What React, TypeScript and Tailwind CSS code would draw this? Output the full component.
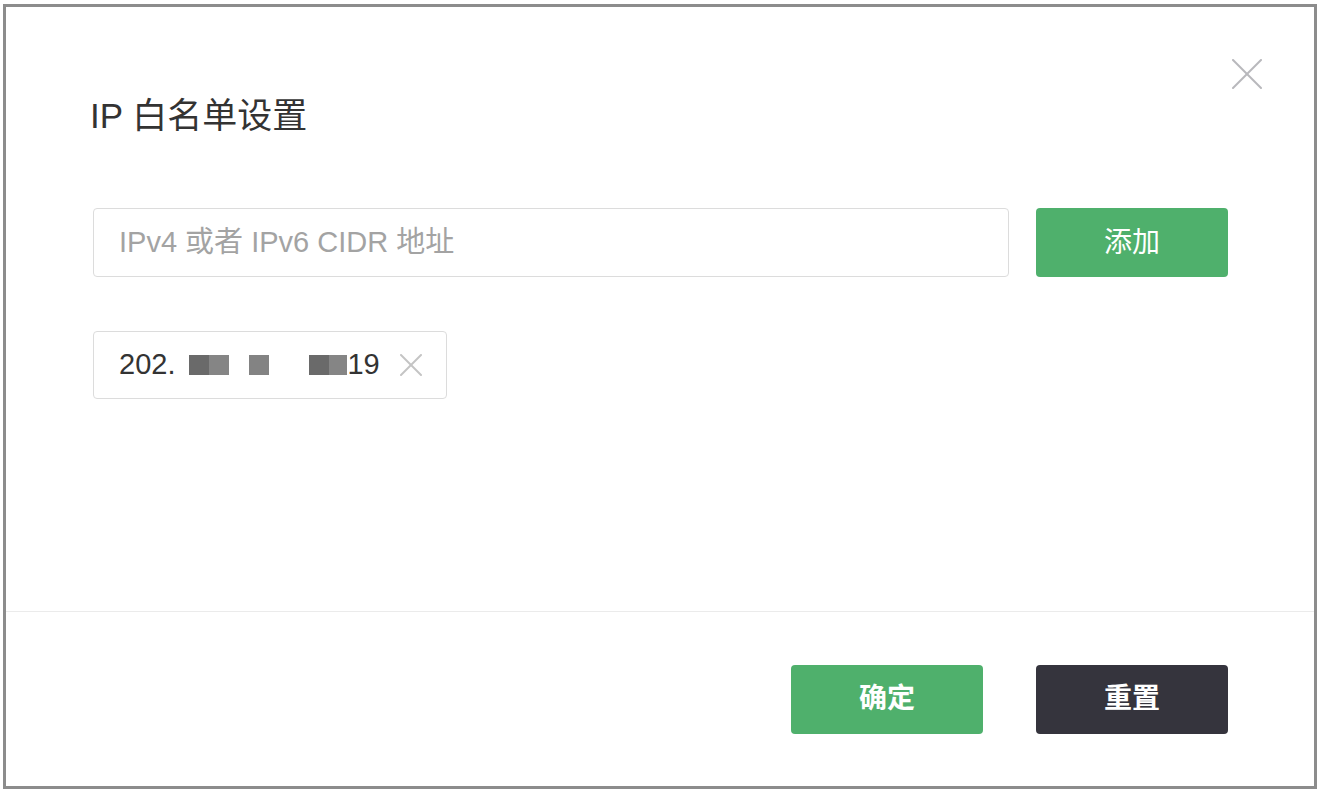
import React from "react";

const font = { fontFamily: '"Liberation Sans", "Noto Sans CJK SC", sans-serif' };

function XIcon({ size, stroke, color }: { size: number; stroke: number; color: string }) {
  return (
    <svg width={size} height={size} viewBox={`0 0 ${size} ${size}`} fill="none">
      <line x1="1" y1="1" x2={size - 1} y2={size - 1} stroke={color} strokeWidth={stroke} strokeLinecap="round" />
      <line x1={size - 1} y1="1" x2="1" y2={size - 1} stroke={color} strokeWidth={stroke} strokeLinecap="round" />
    </svg>
  );
}

export default function App() {
  return (
    <div className="w-[1320px] h-[792px] bg-white pl-[3px] pt-[4px]" style={font}>
      <div className="relative w-[1314px] h-[785px] border-[3px] border-[#8c8c8c] bg-white flex flex-col">
        <button className="absolute left-[1226px] top-[51px] w-[30px] h-[32px] flex items-center justify-center">
          <XIcon size={30} stroke={2} color="#b8b8bc" />
        </button>

        <div className="h-[604px] pl-[87px] pr-[86px] pt-[89px] flex flex-col">
          <div className="text-[35px] leading-[40px] text-[#333333] ml-[-3px]">IP 白名单设置</div>

          <div className="mt-[72px] flex items-center gap-[27px]">
            <div className="flex-1 h-[69px] border border-[#dcdcdc] rounded-[4px] flex items-center pl-[25px] text-[29px] text-[#a3a3a3]">
              IPv4 或者 IPv6 CIDR 地址
            </div>
            <button className="w-[192px] h-[69px] rounded-[4px] bg-[#4fb06c] text-white text-[28px] flex items-center justify-center">
              添加
            </button>
          </div>

          <div className="mt-[54px] flex">
            <div className="h-[68px] border border-[#dcdcdc] rounded-[4px] flex items-center pl-[25px] pr-[24px] text-[29px] text-[#333333]">
              <span>202.</span>
              <span className="ml-[14px] flex h-[20px]">
                <span className="w-[20px] bg-[#6a6a6a]" />
                <span className="w-[20px] bg-[#858585]" />
              </span>
              <span className="ml-[20px] w-[20px] h-[20px] bg-[#838383]" />
              <span className="ml-[40px] flex h-[20px]">
                <span className="w-[20px] bg-[#6a6a6a]" />
                <span className="w-[18px] bg-[#858585]" />
              </span>
              <span>19</span>
              <span className="ml-[20px] flex items-center">
                <XIcon size={22} stroke={2} color="#c4c4c4" />
              </span>
            </div>
          </div>
        </div>

        <div className="h-px bg-[#ebebeb]" />

        <div className="flex-1 flex items-center justify-end pr-[86px] gap-[53px]">
          <button className="w-[192px] h-[69px] rounded-[4px] bg-[#4fb06c] text-white text-[28px] font-semibold flex items-center justify-center">
            确定
          </button>
          <button className="w-[192px] h-[69px] rounded-[4px] bg-[#35343d] text-white text-[28px] font-semibold flex items-center justify-center">
            重置
          </button>
        </div>
      </div>
    </div>
  );
}
